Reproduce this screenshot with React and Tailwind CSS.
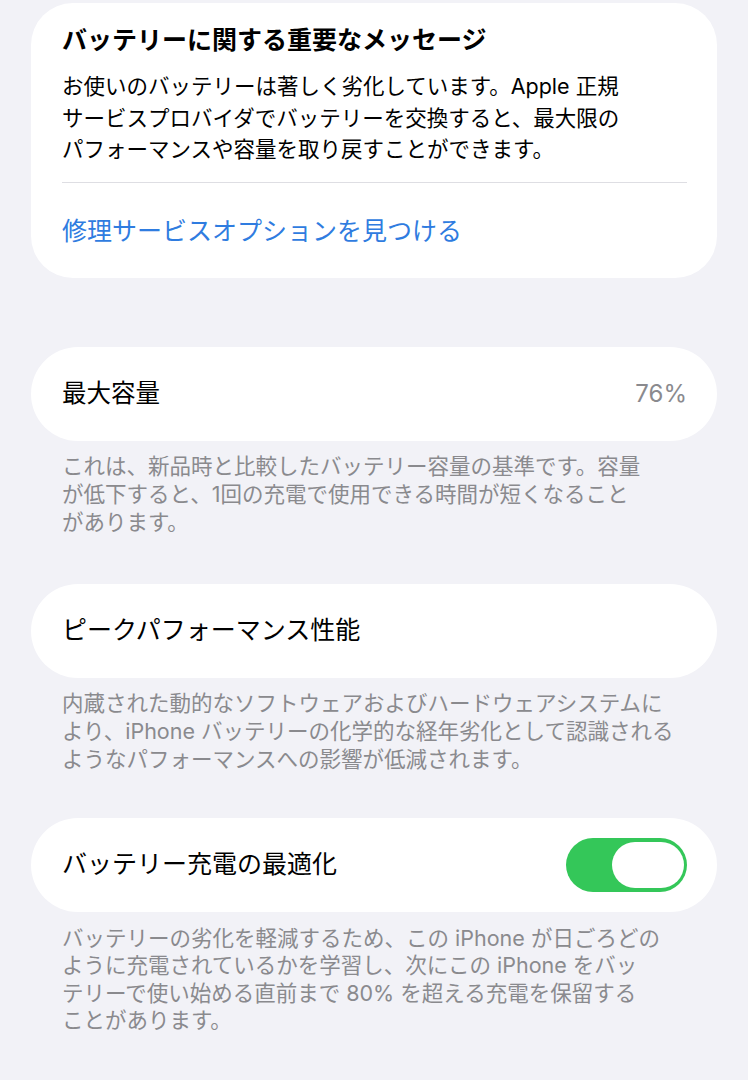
export default function App() {
  const font = { fontFamily: '"Inter", "Noto Sans CJK JP", sans-serif' };
  return (
    <div className="min-h-[1080px] w-[748px] bg-[#f2f2f7] px-[31px] pt-[3px] pb-10" style={font}>
      {/* Card 1 */}
      <div className="rounded-[42px] bg-white pl-[31px] pr-[30px] pt-[22px] pb-[32px]">
        <div className="text-[25px] leading-[30px] font-bold text-black whitespace-nowrap">
          バッテリーに関する重要なメッセージ
        </div>
        <div className="mt-[16px] text-[21.5px] leading-[31.5px] text-black whitespace-nowrap">
          お使いのバッテリーは著しく劣化しています。Apple 正規<br />
          サービスプロバイダでバッテリーを交換すると、最大限の<br />
          パフォーマンスや容量を取り戻すことができます。
        </div>
        <div className="mt-[16px] h-px bg-[#dedee3]" />
        <div className="mt-[33px] text-[25px] leading-[30px] text-[#2f7ce0] whitespace-nowrap">
          修理サービスオプションを見つける
        </div>
      </div>

      {/* Card 2 */}
      <div className="mt-[69px] flex h-[94px] items-center justify-between rounded-full bg-white pl-[31px] pr-[30px]">
        <span className="text-[24.5px] text-black">最大容量</span>
        <span className="text-[24px] text-[#8a8a8e]">76%</span>
      </div>
      <div className="mt-[11px] pl-[31px] text-[21.5px] leading-[28px] text-[#8a8a8e] whitespace-nowrap">
        これは、新品時と比較したバッテリー容量の基準です。容量<br />
        が低下すると、1回の充電で使用できる時間が短くなること<br />
        があります。
      </div>

      {/* Card 3 */}
      <div className="mt-[48px] flex h-[94px] items-center rounded-full bg-white pl-[31px] pr-[30px]">
        <span className="text-[25px] text-black">ピークパフォーマンス性能</span>
      </div>
      <div className="mt-[11px] pl-[31px] text-[21.5px] leading-[28px] text-[#8a8a8e] whitespace-nowrap">
        内蔵された動的なソフトウェアおよびハードウェアシステムに<br />
        より、iPhone バッテリーの化学的な経年劣化として認識される<br />
        ようなパフォーマンスへの影響が低減されます。
      </div>

      {/* Card 4 */}
      <div className="mt-[45px] flex h-[94px] items-center justify-between rounded-full bg-white pl-[31px] pr-[30px]">
        <span className="text-[25px] text-black">バッテリー充電の最適化</span>
        <div className="flex h-[54px] w-[121px] items-center justify-end rounded-full bg-[#34c759] pr-[3px]">
          <div className="h-[46px] w-[72px] rounded-full bg-white" />
        </div>
      </div>
      <div className="mt-[13px] pl-[31px] text-[21.5px] leading-[27.5px] text-[#8a8a8e] whitespace-nowrap">
        バッテリーの劣化を軽減するため、この iPhone が日ごろどの<br />
        ように充電されているかを学習し、次にこの iPhone をバッ<br />
        テリーで使い始める直前まで 80% を超える充電を保留する<br />
        ことがあります。
      </div>
    </div>
  );
}
